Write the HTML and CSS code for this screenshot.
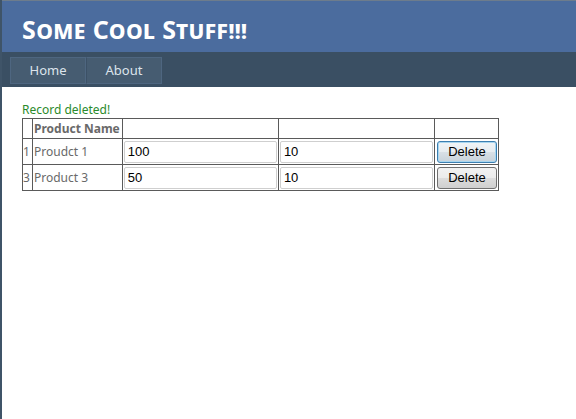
FILE: index.html
```html
<!DOCTYPE html>
<html lang="en">
<head>
    <meta charset="UTF-8">
    <title>Products</title>
    <link rel="stylesheet" href="styles.css">
</head>
<body>
    <div class="page">
        <div class="header">
            <div class="title">
                <h1>Some Cool Stuff!!!</h1>
            </div>
            <div class="menu">
                <a href="#" class="menu-item">Home</a>
                <a href="#" class="menu-item">About</a>
            </div>
        </div>

        <div class="main">
            <div class="message">Record deleted!</div>
            <table class="grid">
                <tr>
                    <th class="idx"></th>
                    <th class="name">Product Name</th>
                    <th></th>
                    <th></th>
                    <th></th>
                </tr>
                <tr>
                    <td class="idx">1</td>
                    <td>Proudct 1</td>
                    <td><input type="text" value="100"></td>
                    <td><input type="text" value="10"></td>
                    <td><button class="focused">Delete</button></td>
                </tr>
                <tr>
                    <td class="idx">3</td>
                    <td>Product 3</td>
                    <td><input type="text" value="50"></td>
                    <td><input type="text" value="10"></td>
                    <td><button>Delete</button></td>
                </tr>
            </table>
        </div>
    </div>
</body>
</html>
```

FILE: styles.css
```css
body {
    margin: 0;
    background: #fff;
    font-family: "Noto Sans", "Open Sans", sans-serif;
    font-size: 12px;
    color: #696969;
}

.page {
    min-height: 419px;
    border-left: 2px solid #3f5468;
    box-sizing: border-box;
}

/* Blue title band and dark menu bar */
.header {
    border-top: 1px solid #6d7c8c;
}

.title {
    background: #4b6c9e;
    height: 51px;
    padding-left: 20px;
    display: flex;
    align-items: center;
}

.title h1 {
    margin: 0;
    color: #fff;
    font-size: 25px;
    font-weight: bold;
    font-variant: small-caps;
    letter-spacing: 0.4px;
    padding-top: 5px;
}

.menu {
    background: #3a4f63;
    height: 35px;
    padding: 5px 0 0 8px;
    box-sizing: border-box;
    display: flex;
    align-items: flex-start;
}

.menu-item {
    display: block;
    width: 74px;
    height: 25px;
    line-height: 25px;
    text-align: center;
    background: #465c71;
    border: 1px solid #4e6680;
    color: #dde4ec;
    text-decoration: none;
    font-size: 13px;
}

.menu-item + .menu-item {
    border-left: 1px solid #3c5166;
}

.main {
    padding: 15px 20px;
}

.message {
    color: #2b8a2b;
    font-size: 12px;
    line-height: 16px;
}

/* Product grid */
.grid {
    border-collapse: collapse;
    width: 477px;
}

.grid th,
.grid td {
    border: 1px solid #5a5a5a;
    padding: 0 1px;
    text-align: left;
    white-space: nowrap;
}

.grid th {
    height: 19px;
    font-weight: bold;
}

.grid .name {
    padding-right: 2px;
}

.grid td {
    height: 25px;
}

.grid .idx {
    width: 9px;
    padding: 0;
}

.grid input {
    width: 153px;
    height: 22px;
    box-sizing: border-box;
    border: 1px solid #cfcfcf;
    border-radius: 2px;
    font-family: "Liberation Sans", Arial, sans-serif;
    font-size: 13px;
    color: #000;
    padding: 0 3px;
}

.grid button {
    width: 60px;
    height: 22px;
    margin-left: 1px;
    font-family: "Liberation Sans", Arial, sans-serif;
    font-size: 13px;
    color: #000;
    border: 1px solid #707070;
    border-radius: 3px;
    background: linear-gradient(#f2f2f2, #ebebeb 50%, #dddddd 51%, #cfcfcf);
}

/* focused button keeps the grey face with a blue ring */
.grid button.focused {
    border-color: #3c7fb1;
    box-shadow: inset 0 0 0 1px #a9d6ef;
    background: linear-gradient(#f0f4f7, #e6ecf0 50%, #d8e0e6 51%, #c8d2da);
}
```
